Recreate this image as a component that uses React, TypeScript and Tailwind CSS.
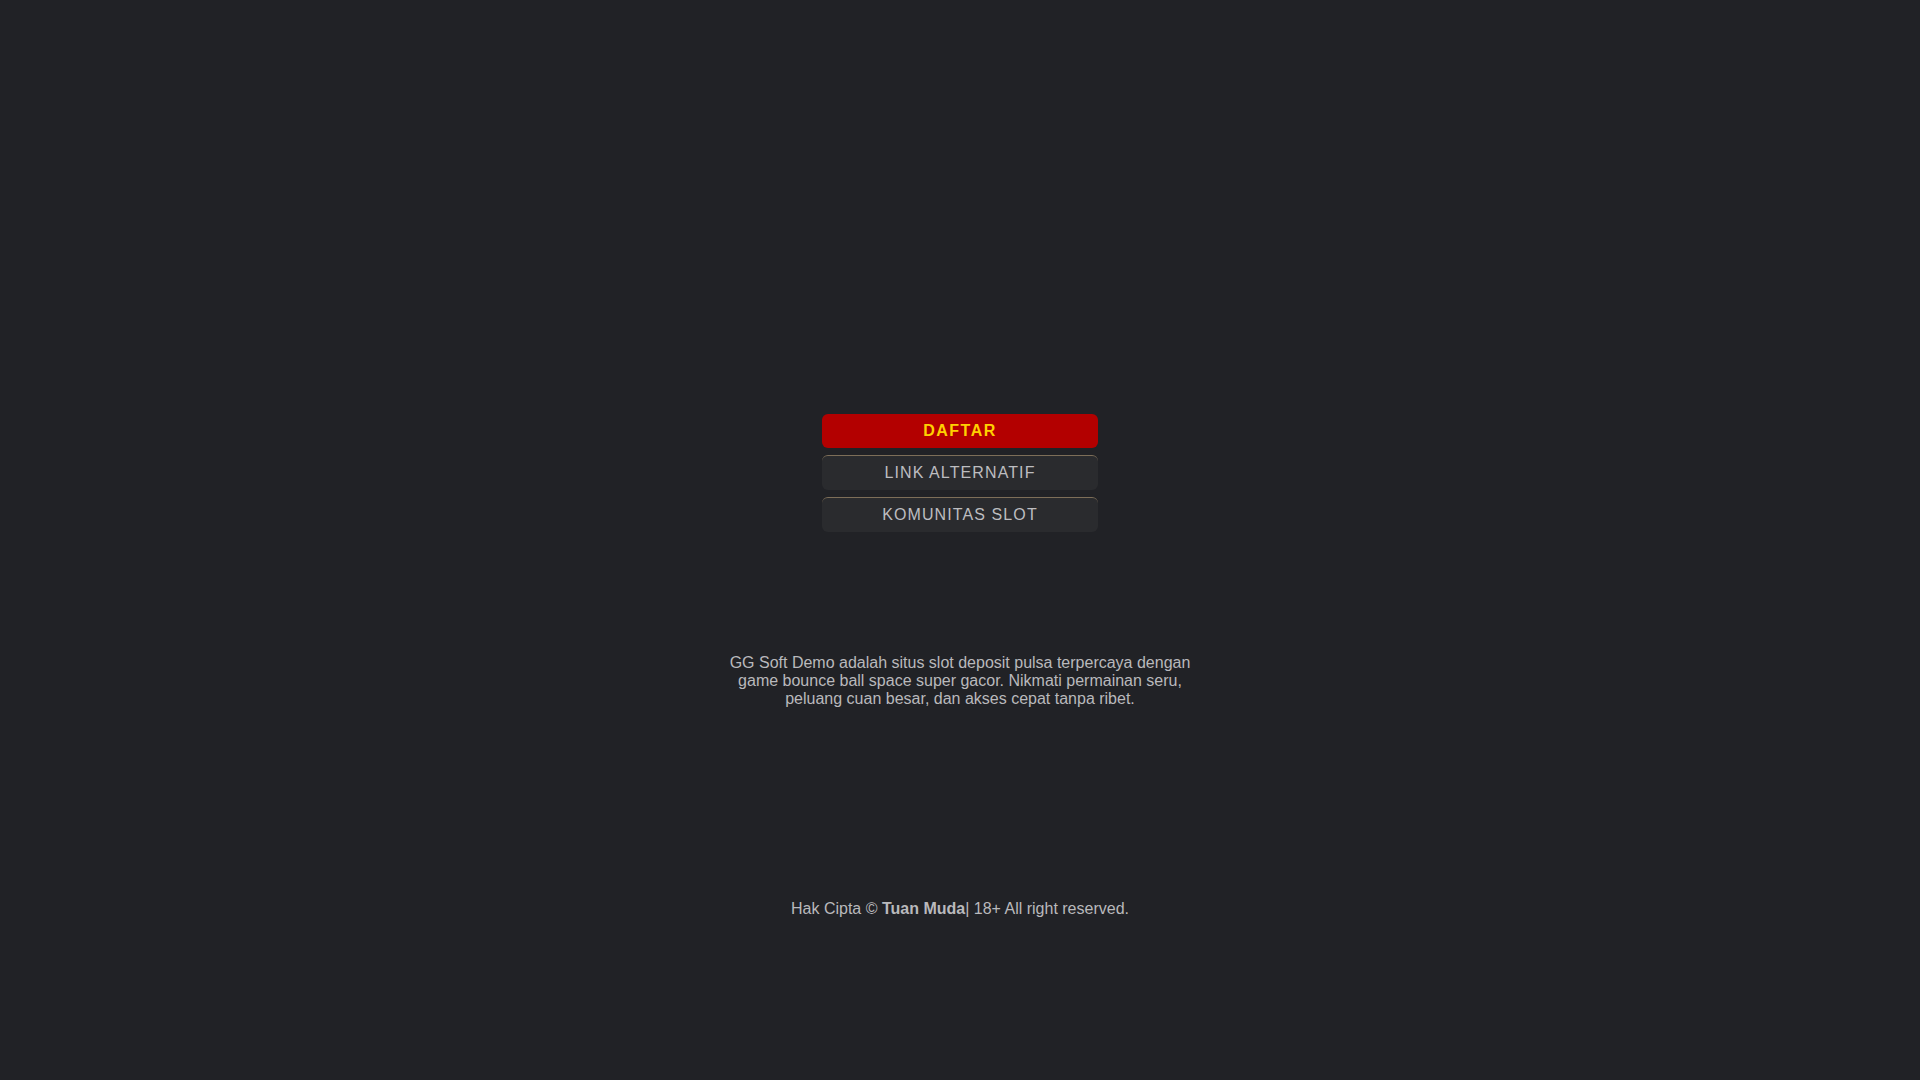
export default function App() {
  return (
    <main className="flex min-h-screen flex-col items-center bg-[#212226] pt-[414px] font-['Liberation_Sans',Arial,sans-serif] text-[16px]">
      <div className="flex w-[276px] flex-col gap-[7px]">
        <a className="flex h-[34px] items-center justify-center rounded-[6px] bg-[#b30000] font-bold tracking-[1.5px] text-[#ffd000]">
          DAFTAR
        </a>
        <a className="flex h-[35px] items-center justify-center rounded-[6px] border-t border-[#7d6e58] bg-[#2a2b2e] tracking-[1.1px] text-[#bdbdc0]">
          LINK ALTERNATIF
        </a>
        <a className="flex h-[35px] items-center justify-center rounded-[6px] border-t border-[#7d6e58] bg-[#2a2b2e] tracking-[1.1px] text-[#bdbdc0]">
          KOMUNITAS SLOT
        </a>
      </div>

      <p className="mt-[122px] w-[470px] text-center leading-[18px] text-[#b9b9bc]">
        GG Soft Demo adalah situs slot deposit pulsa terpercaya dengan game bounce ball space super gacor. Nikmati permainan seru, peluang cuan besar, dan akses cepat tanpa ribet.
      </p>

      <footer className="mt-[192px] leading-[18px] text-[#b9b9bc]">
        Hak Cipta © <b>Tuan Muda</b>| 18+ All right reserved.
      </footer>
    </main>
  );
}
